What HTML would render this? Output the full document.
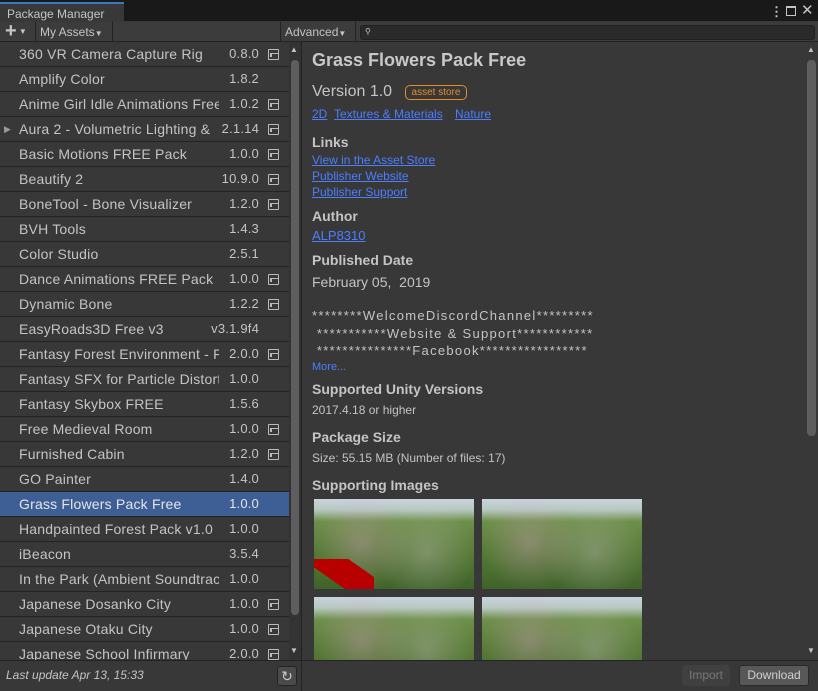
<!DOCTYPE html>
<html><head><meta charset="utf-8"><style>
*{margin:0;padding:0;box-sizing:border-box}
body{width:818px;height:690px;background:#383838;font-family:"Liberation Sans",sans-serif;color:#c4c4c4;position:relative;overflow:hidden}
.abs{position:absolute}
#title{left:0;top:0;width:818px;height:21px;background:#191919}
#tab{left:0;top:2px;width:124px;height:20px;background:#383838;border-top:2px solid #3a79bb;font-size:12px;padding:3px 0 0 7px;color:#c4c4c4}
#tb{left:0;top:22px;width:818px;height:20px;background:#3c3c3c;border-bottom:1px solid #232323}
.btn{position:absolute;top:0;height:20px;font-size:12px;padding-top:3px;border-right:1px solid #232323;color:#c4c4c4}
#search{left:360px;top:25px;width:455px;height:15px;background:#2a2a2a;border:1px solid #212121;border-radius:3px}
#list{left:0;top:42px;width:289px;height:618px;overflow:hidden;background:#383838}
.row{position:relative;height:25px;border-bottom:1px solid #232323;font-size:14px;line-height:24px;letter-spacing:.2px}
.row .n{position:absolute;left:19px;top:0;white-space:nowrap;overflow:hidden;width:200px}
.row .v{position:absolute;right:30px;top:0;font-size:13px}
.row .i{position:absolute;left:268px;top:7px;width:11px;height:11px;border:1px solid #bbb;border-radius:1px}
.row .i:after{content:"";position:absolute;left:1px;top:3px;width:6px;height:3px;border-left:2px solid #bbb;border-top:1px solid #bbb}
.sel{background:#3e5f96;color:#e6e6e6}
#lsb{left:289px;top:42px;width:12px;height:618px;background:#333}
#lth{left:291px;top:60px;width:8px;height:555px;background:#5e5e5e;border-radius:4px}
#div{left:301px;top:42px;width:1px;height:648px;background:#232323}
#det{left:312px;top:42px;width:490px}
h1{position:absolute;top:8px;font-size:18px;font-weight:bold;color:#c8c8c8;white-space:nowrap}
.h{position:absolute;font-size:14px;font-weight:bold;color:#c4c4c4;white-space:nowrap}
.t{position:absolute;font-size:13px;color:#c4c4c4;white-space:nowrap}
.d{letter-spacing:1.3px}
.l{position:absolute;font-size:12px;color:#4c7eff;text-decoration:underline;white-space:nowrap}
#rsb{left:805px;top:42px;width:13px;height:618px;background:#383838}
#rth{left:807px;top:60px;width:9px;height:376px;background:#5e5e5e;border-radius:4px}
#foot{left:0;top:660px;width:818px;height:30px;background:#383838;border-top:1px solid #232323}
.img{position:absolute;width:160px;height:90px;overflow:hidden;background:linear-gradient(#c8d4dc 0,#b8c8c0 12%,#6d8f4a 25%,#557a35 60%,#3f6328 100%)}
.img:after{content:"";position:absolute;inset:0;background:radial-gradient(circle at 30% 50%,rgba(220,160,200,.35),transparent 40%),radial-gradient(circle at 70% 60%,rgba(220,200,220,.3),transparent 40%)}
</style></head><body>
<div id="title" class="abs"></div>
<div id="tab" class="abs">Package Manager</div>
<div class="abs" style="left:770px;top:4px;color:#c4c4c4;font-size:13px;font-weight:bold">⋮</div>
<div class="abs" style="left:786px;top:6px;width:10px;height:10px;border:1px solid #c4c4c4;border-top-width:2px"></div>
<div class="abs" style="left:801px;top:1px;font-size:15px;color:#c4c4c4">✕</div>
<div id="tb" class="abs">
 <div class="btn" style="left:0;width:36px;padding-left:5px;font-size:20px;font-weight:bold;padding-top:0;line-height:19px">+<span style="font-size:8px;vertical-align:3px"> ▼</span></div>
 <div class="btn" style="left:36px;width:77px;padding-left:4px">My Assets<span style="font-size:8px">▼</span></div>
 <div class="btn" style="left:280px;width:76px;padding-left:4px;border-left:1px solid #232323">Advanced<span style="font-size:8px">▼</span></div>
</div>
<div id="search" class="abs"><span style="font-size:8px;position:absolute;left:4px;top:1px">⚲</span></div>
<div id="list" class="abs">
<div class="row"><span class="n">360 VR Camera Capture Rig</span><span class="v">0.8.0</span><span class="i"></span></div>
<div class="row"><span class="n">Amplify Color</span><span class="v">1.8.2</span></div>
<div class="row"><span class="n">Anime Girl Idle Animations Free</span><span class="v">1.0.2</span><span class="i"></span></div>
<div class="row"><span style="position:absolute;left:4px;font-size:9px;color:#999">▶</span><span class="n">Aura 2 - Volumetric Lighting &amp;</span><span class="v">2.1.14</span><span class="i"></span></div>
<div class="row"><span class="n">Basic Motions FREE Pack</span><span class="v">1.0.0</span><span class="i"></span></div>
<div class="row"><span class="n">Beautify 2</span><span class="v">10.9.0</span><span class="i"></span></div>
<div class="row"><span class="n">BoneTool - Bone Visualizer</span><span class="v">1.2.0</span><span class="i"></span></div>
<div class="row"><span class="n">BVH Tools</span><span class="v">1.4.3</span></div>
<div class="row"><span class="n">Color Studio</span><span class="v">2.5.1</span></div>
<div class="row"><span class="n">Dance Animations FREE Pack</span><span class="v">1.0.0</span><span class="i"></span></div>
<div class="row"><span class="n">Dynamic Bone</span><span class="v">1.2.2</span><span class="i"></span></div>
<div class="row"><span class="n">EasyRoads3D Free v3</span><span class="v">v3.1.9f4</span></div>
<div class="row"><span class="n">Fantasy Forest Environment - F</span><span class="v">2.0.0</span><span class="i"></span></div>
<div class="row"><span class="n">Fantasy SFX for Particle Distort</span><span class="v">1.0.0</span></div>
<div class="row"><span class="n">Fantasy Skybox FREE</span><span class="v">1.5.6</span></div>
<div class="row"><span class="n">Free Medieval Room</span><span class="v">1.0.0</span><span class="i"></span></div>
<div class="row"><span class="n">Furnished Cabin</span><span class="v">1.2.0</span><span class="i"></span></div>
<div class="row"><span class="n">GO Painter</span><span class="v">1.4.0</span></div>
<div class="row sel"><span class="n">Grass Flowers Pack Free</span><span class="v">1.0.0</span></div>
<div class="row"><span class="n">Handpainted Forest Pack v1.0</span><span class="v">1.0.0</span></div>
<div class="row"><span class="n">iBeacon</span><span class="v">3.5.4</span></div>
<div class="row"><span class="n">In the Park (Ambient Soundtrac</span><span class="v">1.0.0</span></div>
<div class="row"><span class="n">Japanese Dosanko City</span><span class="v">1.0.0</span><span class="i"></span></div>
<div class="row"><span class="n">Japanese Otaku City</span><span class="v">1.0.0</span><span class="i"></span></div>
<div class="row"><span class="n">Japanese School Infirmary</span><span class="v">2.0.0</span><span class="i"></span></div>
</div>
<div id="lsb" class="abs"></div><div id="lth" class="abs"></div>
<div class="abs" style="left:290px;top:45px;font-size:8px;color:#c4c4c4">▲</div>
<div class="abs" style="left:290px;top:646px;font-size:8px;color:#c4c4c4">▼</div>
<div id="div" class="abs"></div>
<div id="det" class="abs">
<h1>Grass Flowers Pack Free</h1>
<div class="t" style="top:41px;font-size:16px">Version 1.0</div>
<div class="abs" style="left:93px;top:43px;width:62px;height:15px;border:1px solid #e38c2a;border-radius:5px;color:#e38c2a;font-size:10px;text-align:center;line-height:13px">asset store</div>
<div class="l" style="top:65px">2D</div><div class="l" style="left:22px;top:65px">Textures &amp; Materials</div><div class="l" style="left:143px;top:65px">Nature</div>
<div class="h" style="top:92px">Links</div>
<div class="l" style="top:111px">View in the Asset Store</div>
<div class="l" style="top:127px">Publisher Website</div>
<div class="l" style="top:143px">Publisher Support</div>
<div class="h" style="top:166px">Author</div>
<div class="l" style="top:186px;font-size:13px">ALP8310</div>
<div class="h" style="top:210px">Published Date</div>
<div class="t" style="top:232px;font-size:14px">February 05,&nbsp; 2019</div>
<div class="t d" style="top:266px">********WelcomeDiscordChannel*********</div>
<div class="t d" style="top:284px">&nbsp;***********Website &amp; Support************</div>
<div class="t d" style="top:301px">&nbsp;***************Facebook*****************</div>
<div class="l" style="top:319px;font-size:11px;text-decoration:none">More...</div>
<div class="h" style="top:339px">Supported Unity Versions</div>
<div class="t" style="top:361px;font-size:12px">2017.4.18 or higher</div>
<div class="h" style="top:387px">Package Size</div>
<div class="t" style="top:409px;font-size:12px">Size: 55.15 MB (Number of files: 17)</div>
<div class="h" style="top:435px">Supporting Images</div>
<div class="img" style="left:2px;top:457px"><div style="position:absolute;left:0;top:60px;width:60px;height:30px;background:linear-gradient(35deg,transparent 30%,#b80000 30%,#b80000 75%,transparent 75%);z-index:1"></div></div>
<div class="img" style="left:170px;top:457px"></div>
<div class="img" style="left:2px;top:555px"></div>
<div class="img" style="left:170px;top:555px"></div>
</div>
<div id="rsb" class="abs"></div><div id="rth" class="abs"></div>
<div class="abs" style="left:807px;top:45px;font-size:8px;color:#c4c4c4">▲</div>
<div class="abs" style="left:807px;top:646px;font-size:8px;color:#c4c4c4">▼</div>
<div id="foot" class="abs">
<div class="abs" style="left:6px;top:7px;font-size:12px;font-style:italic;color:#c4c4c4">Last update Apr 13, 15:33</div>
<div class="abs" style="left:277px;top:5px;width:20px;height:20px;background:#4a4a4a;border:1px solid #242424;border-radius:3px;color:#ccc;font-size:14px;text-align:center;line-height:18px">↻</div>
<div class="abs" style="left:301px;top:0;width:1px;height:30px;background:#232323"></div>
<div class="abs" style="left:682px;top:4px;width:48px;height:21px;background:#404040;border-radius:3px;color:#777;font-size:12px;text-align:center;line-height:21px">Import</div>
<div class="abs" style="left:739px;top:4px;width:70px;height:21px;background:#585858;border:1px solid #2a2a2a;border-radius:3px;color:#d0d0d0;font-size:12px;text-align:center;line-height:19px">Download</div>
</div>
</body></html>
